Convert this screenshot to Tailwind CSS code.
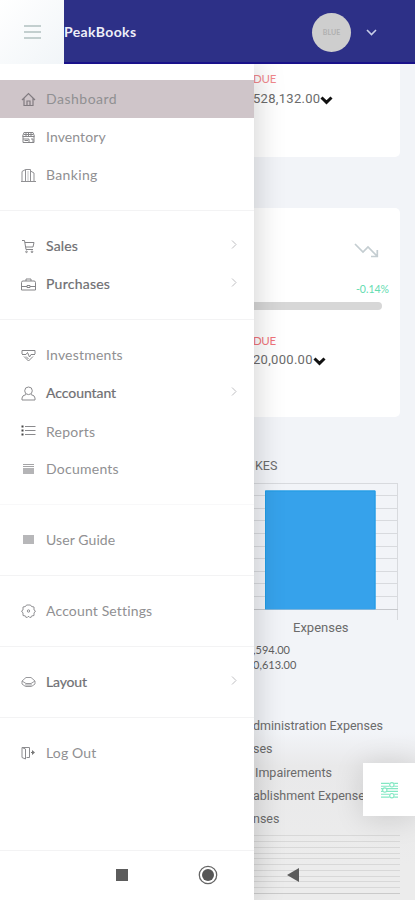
<!DOCTYPE html>
<html lang="en">
<head>
<meta charset="utf-8">
<title>PeakBooks</title>
<script src="https://cdn.jsdelivr.net/npm/@tailwindcss/browser@4"></script>
</head>
<body class="bg-[#f2f4f8]">
<div class="relative h-[900px] w-[415px] overflow-hidden bg-[#f2f4f8] font-['Roboto','Liberation_Sans',sans-serif] text-[#6b6b6b]">

  <!-- Dashboard content -->
  <main class="flex h-full flex-col pl-[253px] pt-16 text-[13px] whitespace-nowrap">
    <section class="mr-[15px] h-[93px] rounded-br-[5px] bg-white pt-[8px]">
      <div class="h-[14px] font-['Lato',sans-serif] text-[11.5px] leading-[14px] tracking-[-.2px] text-[#f1888c]">DUE</div>
      <div class="mt-[4px] flex h-[18px] items-center leading-[18px]"><span class="tracking-[.3px]">528,132.00</span>
        <svg class="mt-[3px] h-[9px] w-[13px]" viewBox="0 0 13 9" fill="none" stroke="#111" stroke-width="3"><path d="M1.5 1.5 6.5 6.3 11.5 1.5"/></svg></div>
    </section>
    <section class="mt-[51px] mr-[15px] flex h-[209px] flex-col rounded-r-[5px] bg-white">
      <svg class="mt-[34px] ml-[101px] h-[17px] w-[26px] shrink-0" viewBox="0 0 26 17" fill="none" stroke="#c4cdd1" stroke-width="1.7"><path d="M1 2 9 10 14 5 23 14M23.3 8v6.5H17"/></svg>
      <div class="mt-[23px] mr-[11px] h-[14px] text-right font-['Lato',sans-serif] text-[10.5px] leading-[14px] text-[#63dcb0]">-0.14%</div>
      <div class="mt-[6px] mr-[18px] h-[8px] shrink-0 rounded-r-[4px] bg-[#d7d7d7]"></div>
      <div class="mt-[24px] h-[14px] font-['Lato',sans-serif] text-[11.5px] leading-[14px] tracking-[-.4px] text-[#f0747a]">DUE</div>
      <div class="mt-[3px] flex h-[18px] items-center leading-[18px]"><span class="tracking-[.3px]">20,000.00</span>
        <svg class="mt-[3px] h-[9px] w-[13px]" viewBox="0 0 13 9" fill="none" stroke="#111" stroke-width="3"><path d="M1.5 1.5 6.5 6.3 11.5 1.5"/></svg></div>
    </section>
    <section class="mt-[41px]">
      <div class="h-[16px] pl-[2px] text-[12.5px] leading-[16px]">KES</div>
      <svg class="mt-[8px] block h-[140px] w-[146px]" viewBox="0 0 146 140" fill="none">
        <path stroke="#d8dade" d="M0 1.500H145M0 13.500H145M0 26.500H145M0 38.500H145M0 51.500H145M0 64.500H145M0 76.500H145M0 89.500H145M0 101.500H145M0 114.500H145M144.5 1V138"/>
        <path stroke="#c6c8cc" d="M0 127.500H145"/>
        <path fill="#36a2eb" d="M12 8.500H122.500V127.500H12z"/>
        <path stroke="#209be4" stroke-width="1" d="M12.500 127V9H122V127"/>
      </svg>
      <div class="ml-[40px] -mt-[2px] h-[16px] leading-[16px]">Expenses</div>
      <div class="mt-[6px] font-['Lato',sans-serif] text-[11px] leading-[15px] text-[#606060]"><p>,594.00</p><p>0,613.00</p></div>
    </section>
    <section class="mt-[60px] h-[168px] bg-[linear-gradient(to_bottom,#f2f4f8,#e9e9ea_20%,#ececec_80%)] text-[12.5px] leading-[23.25px]">
      <div class="-mt-[18px]"><p>dministration Expenses</p><p>ses</p><p class="pl-[2px]">Impairements</p><p>ablishment Expenses</p><p>nses</p></div>
      <svg class="mt-[5px] block h-[66px] w-[147px]" viewBox="0 0 147 66" stroke="#d8d8d8"><path d="M0 .5H147M0 6.500H147M0 12.500H147M0 18.500H147M0 23.500H147M0 29.500H147M0 35.500H147M0 41.500H147M0 46.500H147M0 52.500H147"/><path stroke="#cacaca" d="M0 58.500H147"/></svg>
    </section>
  </main>

  <!-- Settings tab -->
  <button class="absolute top-[763px] right-0 flex h-[53px] w-[52px] items-center justify-center bg-white shadow-[0_2px_30px_rgba(0,0,0,0.14)]">
    <svg class="h-[18px] w-[17px]" viewBox="0 0 18 19" fill="none" stroke="#83e8c3" stroke-width="1.200"><path d="M0 2.500H9M14 2.500H18M0 5.500H9M14 5.500H18M0 8H2M6 8H18M0 11H2M6 11H18M0 14H9M14 14H18M0 17H9M14 17H18"/><circle cx="11.500" cy="4" r="2.300"/><circle cx="4" cy="9.500" r="2.300"/><circle cx="11.500" cy="15.500" r="2.300"/></svg>
  </button>

  <!-- Navigation drawer -->
  <aside class="absolute top-16 left-0 h-[836px] w-[254px] bg-white pt-4 font-['Lato',sans-serif] text-[14px] text-[#909092] shadow-[0_0_30px_rgba(0,0,0,0.2)]">
    <nav>
      <a class="flex h-[38px] items-center bg-[#cfc5c9] pl-[21px]"><svg class="h-[15px] w-[15px]" viewBox="0 0 15 15" fill="none" stroke="#817b80" stroke-width="1.200"><path d="M1 8 7.500 1.500 14 8M3 6.500V13.500H12V6.500M6 13.500V9H9V13.500"/></svg><span class="ml-[10px] pb-px tracking-[.5px]">Dashboard</span></a>
      <a class="flex h-[38px] items-center pl-[21px]"><svg class="h-[15px] w-[15px]" viewBox="0 0 15 15" fill="none" stroke="#858588"><path d="M3 2.500H12L13.500 6.500H1.500zM2 7V12.500H13V7M5 3V7M7.500 3V7M10 3V7M2 9H8V12M10 9H12V12M3.500 10.500H7M3 4.500H12"/></svg><span class="ml-[10px] pb-px tracking-[.1px]">Inventory</span></a>
      <a class="flex h-[38px] items-center pl-[21px]"><svg class="h-[15px] w-[15px]" viewBox="0 0 15 15" fill="none" stroke="#919194"><path d="M1 13.500V3.500L4.500 1.500V13.500M4.500 1.500H9.500V13.500M9.500 3 13 5V13.500M0 13.500H15"/><path stroke="#c4c4c6" d="M7 3V13"/></svg><span class="ml-[10px] pb-px tracking-[.35px]">Banking</span></a>
    </nav>
    <hr class="mt-[16px] mb-[16px] border-[#f3f3f4]">
    <nav class="text-[#6f6f73]">
      <a class="flex h-[38px] items-center pl-[21px]"><svg class="h-[15px] w-[15px]" viewBox="0 0 15 15" fill="none" stroke="#858588"><path d="M1 1.500H3.500L5 10.500H12M4 3.500H13L12 8H5"/><circle cx="5.500" cy="12.800" r=".8"/><circle cx="11" cy="12.800" r=".8"/></svg><span class="ml-[10px] pb-[2px] tracking-[.15px] [-webkit-text-stroke:.2px]">Sales</span><svg class="mr-[17px] mb-[3px] ml-auto h-[9px] w-[6px]" viewBox="0 0 6 9" fill="none" stroke="#bebec1"><path d="M1 .5 5 4.500 1 8.500"/></svg></a>
      <a class="flex h-[38px] items-center pl-[21px]"><svg class="h-[15px] w-[15px]" viewBox="0 0 15 15" fill="none" stroke="#858588"><path d="M.5 13V5.500Q.5 4 2 4H13Q14.500 4 14.500 5.500V13zM5 4V2H10V4M.500 9.500H6M9 9.500H14.500M6 8.500H9V10.500H6z"/></svg><span class="ml-[10px] pb-[2px] tracking-[.25px] [-webkit-text-stroke:.2px]">Purchases</span><svg class="mr-[17px] mb-[3px] ml-auto h-[9px] w-[6px]" viewBox="0 0 6 9" fill="none" stroke="#bebec1"><path d="M1 .5 5 4.500 1 8.500"/></svg></a>
    </nav>
    <hr class="mt-[16px] mb-[16px] border-[#f3f3f4]">
    <nav>
      <a class="flex h-[38px] items-center pl-[21px]"><svg class="h-[15px] w-[15px]" viewBox="0 0 15 15" fill="none" stroke="#858588"><path d="M1 6V2.500H14V6M3 8.500 7.500 13 12 8.500M1 6.500H5L6.500 4.500 8.500 9 10 6.500H14M5 8.500 7.500 11"/></svg><span class="ml-[10px] pb-px tracking-[.2px]">Investments</span></a>
      <a class="flex h-[38px] items-center pl-[21px] text-[#6f6f73]"><svg class="h-[15px] w-[15px]" viewBox="0 0 15 15" fill="none" stroke="#8b8b8e"><circle cx="7.500" cy="4.800" r="3.800"/><path d="M5 8.500Q1 9.500 1 12V14H14V12Q14 9.500 10 8.500"/></svg><span class="ml-[10px] pb-[2px] tracking-[-.05px] [-webkit-text-stroke:.2px]">Accountant</span><svg class="mr-[17px] mb-[3px] ml-auto h-[9px] w-[6px]" viewBox="0 0 6 9" fill="none" stroke="#bebec1"><path d="M1 .5 5 4.500 1 8.500"/></svg></a>
      <a class="flex h-[38px] items-center pl-[21px]"><svg class="h-[15px] w-[15px]" viewBox="0 0 15 15" fill="none" stroke="#8a8a8d"><path d="M4 2.500H14.500M4 6.500H14.500M4 10.500H14.500"/><path stroke="#444" stroke-width="2" d="M.5 2.500H2.500M.5 6.500H2.500M.5 10.500H2.500"/></svg><span class="ml-[10px] tracking-[.25px]">Reports</span></a>
      <a class="flex h-[38px] items-center pl-[21px]"><svg class="h-[15px] w-[15px]" viewBox="0 0 15 15" fill="none" stroke="#a4a4a6"><path d="M2 2.500H13M2 4.500H13"/><path fill="#b4b4b6" stroke="none" d="M2 6H13V12H2z"/></svg><span class="ml-[10px] pb-px tracking-[.25px]">Documents</span></a>
    </nav>
    <hr class="mt-[16px] mb-[16px] border-[#f8f8f9]">
    <nav>
      <a class="flex h-[38px] items-center pl-[21px]"><svg class="h-[15px] w-[15px]" viewBox="0 0 15 15" fill="#b7b7b9"><path d="M2 2H13V11H2z"/></svg><span class="ml-[10px] pb-px tracking-[.1px]">User Guide</span></a>
    </nav>
    <hr class="mt-[16px] mb-[16px] border-[#f3f3f4]">
    <nav>
      <a class="flex h-[38px] items-center pl-[21px]"><svg class="h-[15px] w-[15px]" viewBox="0 0 15 15" fill="none" stroke="#909093"><path d="M5.500 1 9.500 1 10.500 2.500 13 3 13 6 14.500 7 13 9 13 11.500 10.500 12 9.500 14 8 12.500H7L5.500 14 4.500 12 2 11.500V9L.5 7 2 6V3L4.500 2.500z"/><circle cx="7.500" cy="7" r="1.200"/></svg><span class="ml-[10px] pb-px tracking-[.15px]">Account Settings</span></a>
    </nav>
    <hr class="mt-[16px] mb-[16px] border-[#f3f3f4]">
    <nav class="text-[#6f6f73]">
      <a class="flex h-[38px] items-center pl-[21px]"><svg class="h-[15px] w-[15px]" viewBox="0 0 15 15" fill="none" stroke="#99999c"><path d="M5 2.500H10L14 6 10 8.500H5L1 6zM1 6V9L4.500 11.500H10.500L14 9V6M4 10H11"/></svg><span class="ml-[10px] pb-[2px] tracking-[-.15px] [-webkit-text-stroke:.2px]">Layout</span><svg class="mr-[17px] mb-[3px] ml-auto h-[9px] w-[6px]" viewBox="0 0 6 9" fill="none" stroke="#bebec1"><path d="M1 .5 5 4.500 1 8.500"/></svg></a>
    </nav>
    <hr class="mt-[16px] mb-[16px] border-[#f3f3f4]">
    <nav>
      <a class="flex h-[38px] items-center pl-[21px]"><svg class="h-[15px] w-[15px]" viewBox="0 0 15 15" fill="none" stroke="#8c8c8f"><path d="M1 1.500H8.500V11.500H5.500M1 1.500V11.500L4.500 13V3L1 1.500"/><path fill="#777" stroke="none" d="M10 6H11V4L14 6.500 11 9V7H10z"/></svg><span class="ml-[10px] pb-[2px] tracking-[.15px]">Log Out</span></a>
    </nav>
    <hr class="mt-[78px] border-[#f3f3f4]">
  </aside>

  <!-- App bar -->
  <header class="absolute inset-x-0 top-0 flex h-16 items-center border-b-2 border-[#19118a] bg-[#2d3087]">
    <button class="flex h-16 w-16 shrink-0 flex-col items-center justify-center gap-[4px] self-start bg-gradient-to-br from-white to-[#f1f5f8]"><i class="h-[2px] w-[17px] bg-[#c3cfcf]"></i><i class="h-[2px] w-[17px] bg-[#c3cfcf]"></i><i class="h-[2px] w-[17px] bg-[#c3cfcf]"></i></button>
    <h1 class="font-['Lato',sans-serif] text-[14px] font-bold tracking-[.35px] text-[#eeeef8]">PeakBooks</h1>
    <div class="mr-[64px] ml-auto mt-[2px] flex h-[39px] w-[39px] items-center justify-center rounded-full bg-[#cecece] font-['Lato',sans-serif] text-[7px] font-bold text-[#b0b0b0]">BLUE</div>
    <svg class="absolute top-[29px] right-[38px] h-[7px] w-[11px]" viewBox="0 0 11 7" fill="none" stroke="#c9cee8" stroke-width="1.600"><path d="M1 1 5.500 5.500 10 1"/></svg>
  </header>

  <!-- System navigation -->
  <footer class="absolute inset-x-0 bottom-0 flex h-[50px] items-center">
    <svg class="ml-[116px] h-[12px] w-[12px]" viewBox="0 0 12 12" fill="#5c5c5c"><path d="M0 0H12V12H0z"/></svg>
    <svg class="ml-[70px] h-[20px] w-[20px]" viewBox="0 0 20 20" fill="none" stroke="#656565" stroke-width="1.300"><circle cx="10" cy="10" r="8.700"/><circle cx="10" cy="10" r="6" fill="#555" stroke="none"/></svg>
    <svg class="ml-[69px] h-[14px] w-[12px]" viewBox="0 0 12 14" fill="#5c5c5c"><path d="M12 0V14L0 7z"/></svg>
  </footer>
</div>
</body>
</html>
